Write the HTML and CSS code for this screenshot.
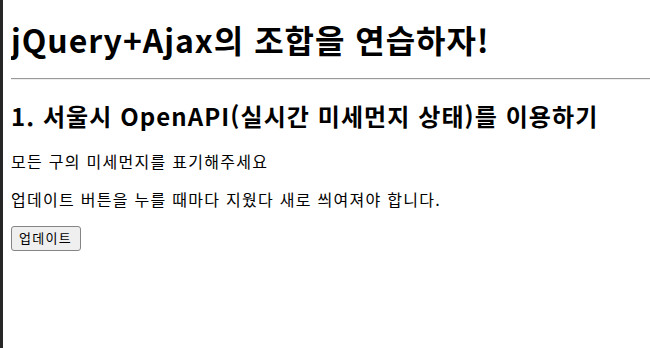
FILE: index.html
```html
<!DOCTYPE html>
<html lang="ko">

<head>
    <meta charset="UTF-8">
    <meta name="viewport" content="width=device-width, initial-scale=1.0">
    <title>jQuery+Ajax</title>
    <link rel="stylesheet" href="styles.css">
</head>

<body>
    <h1>jQuery+Ajax의 조합을 연습하자!</h1>
    <hr>
    <div class="question">
        <h2>1. 서울시 OpenAPI(실시간 미세먼지 상태)를 이용하기</h2>
        <p>모든 구의 미세먼지를 표기해주세요</p>
        <p>업데이트 버튼을 누를 때마다 지웠다 새로 씌여져야 합니다.</p>
        <button class="update-btn" onclick="q1()">업데이트</button>
        <ul id="names-q1"></ul>
    </div>

    <script>
        function q1() {
            document.getElementById("names-q1").innerHTML = "";
        }
    </script>
</body>

</html>
```

FILE: styles.css
```css
html {
    border-left: 3px solid #262626;
    background: white;
    min-height: 100%;
    overflow: hidden;
}

body {
    margin: 8px -12px 8px 8px;
    font-family: "Noto Sans CJK KR", "Noto Sans", sans-serif;
    line-height: 1.33;
    color: black;
}

h1 {
    font-size: 32px;
    letter-spacing: 0.03em;
    margin-top: 10px;
    margin-bottom: 17px;
}

hr {
    border: none;
    border-top: 1px solid #9a9a9a;
    border-bottom: 1px solid #eeeeee;
    margin: 0;
}

h2 {
    font-size: 24px;
    letter-spacing: 0.045em;
    margin: 20px 0;
}

p {
    font-size: 16px;
    letter-spacing: 0.08em;
    margin: 16px 0;
}

.update-btn {
    font-family: "Noto Sans CJK KR", sans-serif;
    font-size: 13px;
    letter-spacing: 0.1em;
    line-height: 1.3;
    padding: 3px 8px 3px 7px;
    background: #efefef;
    border: 1px solid #858585;
    border-radius: 3px;
    color: black;
}

ul {
    margin: 0;
}
```
